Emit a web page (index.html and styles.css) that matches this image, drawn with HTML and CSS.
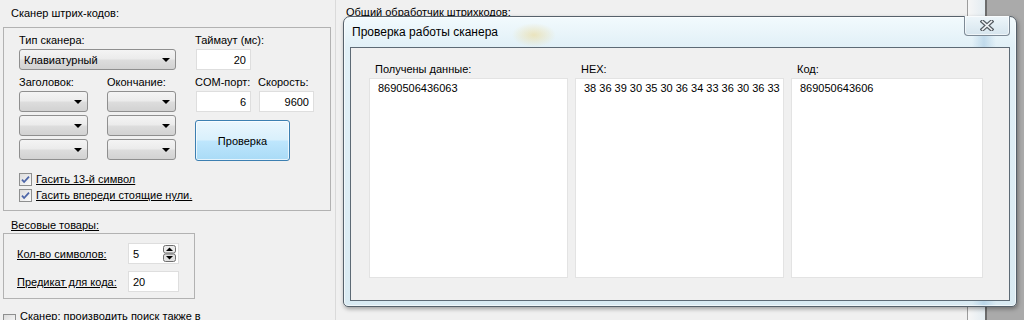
FILE: index.html
```html
<!DOCTYPE html>
<html lang="ru">
  <head>
    <meta charset="UTF-8" />
    <title>Сканер штрих-кодов</title>
    <link rel="stylesheet" href="styles.css">
  </head>
  <body>
    <div class="left">
      <div class="caption">Сканер штрих-кодов:</div>
      <div class="group scanner">
        <div class="grid">
          <span class="lbl type-lbl">Тип сканера:</span>
          <span class="lbl tmo-lbl">Таймаут (мс):</span>
          <div class="combo type-combo">Клавиатурный</div>
          <div class="field right tmo-field">20</div>

          <span class="lbl">Заголовок:</span>
          <span class="lbl">Окончание:</span>
          <span class="lbl">COM-порт:</span>
          <span class="lbl">Скорость:</span>

          <div class="combo"></div>
          <div class="combo"></div>
          <div class="field right">6</div>
          <div class="field right">9600</div>

          <button class="check-btn">Проверка</button>
          <div class="combo"></div>
          <div class="combo"></div>
          <div class="combo"></div>
          <div class="combo"></div>
        </div>
        <div class="checks">
          <label class="checkrow"><span class="chk"><svg width="11" height="11" viewBox="0 0 11 11"><path d="M2 5.6l2.1 2.4L9 2.6" fill="none" stroke="#4d66a8" stroke-width="1.8"/></svg></span><u>Гасить 13-й символ</u></label>
          <label class="checkrow"><span class="chk"><svg width="11" height="11" viewBox="0 0 11 11"><path d="M2 5.6l2.1 2.4L9 2.6" fill="none" stroke="#4d66a8" stroke-width="1.8"/></svg></span><u>Гасить впереди стоящие нули.</u></label>
        </div>
      </div>

      <div class="caption weight-caption"><u>Весовые товары:</u></div>
      <div class="group weights">
        <u>Кол-во символов:</u>
        <div class="field spin-field">5
          <svg class="spin" width="13" height="17" viewBox="0 0 13 17">
            <rect x="0.5" y="0.5" width="12" height="7.5" rx="2" fill="#ececec" stroke="#6f6f6f"/>
            <rect x="0.5" y="9" width="12" height="7.5" rx="2" fill="#e2e2e2" stroke="#6f6f6f"/>
            <path d="M3 6h7L6.5 2.5z" fill="#000"/>
            <path d="M3 11h7l-3.5 3.5z" fill="#000"/>
          </svg>
        </div>
        <u>Предикат для кода:</u>
        <div class="field">20</div>
      </div>

      <label class="checkrow extra"><span class="chk"></span>Сканер: производить поиск также в</label>
    </div>

    <div class="main">
      <div class="main-caption">Общий обработчик штрихкодов:</div>
    </div>
    <div class="rail"></div>
    <div class="desk"></div>

    <div class="dialog">
      <div class="title">Проверка работы сканера</div>
      <div class="close">
        <svg width="14" height="11" viewBox="0 0 14 11">
          <path d="M2.5 1.5l9 8M11.5 1.5l-9 8" stroke="#555b61" stroke-width="4" stroke-linecap="square"/>
          <path d="M2.5 1.5l9 8M11.5 1.5l-9 8" stroke="#f2f4f6" stroke-width="1.6" stroke-linecap="square"/>
        </svg>
      </div>
      <div class="client">
        <div class="cols">
          <div class="col">
            <div class="col-lbl">Получены данные:</div>
            <div class="box">8690506436063</div>
          </div>
          <div class="col">
            <div class="col-lbl">HEX:</div>
            <div class="box">38 36 39 30 35 30 36 34 33 36 30 36 33</div>
          </div>
          <div class="col">
            <div class="col-lbl">Код:</div>
            <div class="box">869050643606</div>
          </div>
        </div>
      </div>
    </div>
  </body>
</html>
```

FILE: styles.css
```css
* {
  box-sizing: border-box;
}
body {
  margin: 0;
  width: 1024px;
  height: 320px;
  overflow: hidden;
  position: relative;
  display: flex;
  background: #f0f0f0;
  color: #000;
  font: 11px/14px "Liberation Sans", Arial, sans-serif;
}
u {
  text-decoration: underline;
}

/* left panel */
.left {
  width: 336px;
  padding: 6px 0 0 3px;
  border-right: 1px solid #dadada;
}
.caption {
  padding-left: 8px;
  height: 14px;
  margin-bottom: 7px;
}
.group {
  border: 1px solid #b2b2b2;
}
.scanner {
  width: 328px;
  height: 184px;
  padding: 5px 0 0 15px;
}
.grid {
  display: grid;
  grid-template-columns: 88px 88px 63px 56px;
  grid-template-rows: 14px 21px 17px 21px 22px 22px;
  row-gap: 2px;
  align-items: end;
}
.type-lbl {
  grid-row: 1;
  grid-column: 1 / 3;
}
.tmo-lbl {
  grid-row: 1;
  grid-column: 3 / 5;
}
.type-combo {
  grid-row: 2;
  grid-column: 1 / 3;
  width: 157px !important;
}
.tmo-field {
  grid-row: 2;
  grid-column: 3 / 5;
}
.combo {
  position: relative;
  width: 69px;
  height: 21px;
  padding: 3px 0 0 4px;
  border: 1px solid #8f8f8f;
  border-radius: 3px;
  background: linear-gradient(#f4f4f4, #ebebeb 48%, #dddddd 52%, #d2d2d2);
}
.combo::after {
  content: '';
  position: absolute;
  right: 5px;
  top: 8px;
  border-left: 4px solid transparent;
  border-right: 4px solid transparent;
  border-top: 4px solid #000;
}
.field {
  width: 55px;
  height: 21px;
  margin-left: 1px;
  padding: 3px 4px 0 4px;
  background: #fff;
  border: 1px solid #dedede;
}
.right {
  text-align: right;
}
.check-btn {
  grid-column: 3 / 5;
  grid-row: 5 / 7;
  align-self: start;
  width: 95px;
  height: 41px;
  margin: 6px 0 0 0;
  border: 1px solid #3c7fb1;
  border-radius: 3px;
  background: linear-gradient(#eaf6fd, #d9f0fc 48%, #bee6fd 52%, #a9dbf6);
  box-shadow: inset 0 0 0 1px rgba(255, 255, 255, 0.7);
  font: inherit;
  color: #000;
  padding: 0;
}
.checks {
  margin-top: 11px;
}
.checkrow {
  display: flex;
  align-items: center;
  gap: 4px;
  height: 16px;
}
.chk {
  width: 13px;
  height: 13px;
  border: 1px solid #8e8f8f;
  background: linear-gradient(135deg, #dcdcdc, #fbfbfb);
  display: flex;
  align-items: center;
  justify-content: center;
}
.weight-caption {
  margin: 7px 0 1px 0;
}
.weights {
  width: 192px;
  height: 66px;
  padding: 9px 0 0 13px;
  display: grid;
  grid-template-columns: 111px 51px;
  grid-auto-rows: 21px;
  row-gap: 7px;
  align-items: center;
}
.weights .field {
  width: 51px;
  margin: 0;
  padding-left: 4px;
}
.spin-field {
  position: relative;
}
.spin {
  position: absolute;
  right: 2px;
  top: 1px;
}
.extra {
  margin-top: 10px;
  align-items: flex-start;
}
.extra .chk {
  margin-top: 5px;
}

/* right side */
.main {
  width: 631px;
}
.main-caption {
  padding: 5px 0 0 10px;
}
.rail {
  width: 20px;
  border-left: 1px solid #9c9c9c;
  border-right: 2px solid #6c6c6c;
  background: linear-gradient(to right, #f6f6f6, #e3ecf1);
}
.desk {
  flex: 1;
  background: #aaaaaa;
}

/* dialog */
.dialog {
  position: absolute;
  left: 343px;
  top: 16px;
  width: 674px;
  height: 291px;
  display: flex;
  flex-direction: column;
  padding: 0 6px 5px 6px;
  border: 1px solid #56616b;
  border-radius: 7px 7px 5px 5px;
  background:
    radial-gradient(ellipse 22px 12px at 190px 18px, rgba(236, 214, 140, 0.55), transparent),
    linear-gradient(to right, transparent 628px, rgba(150, 190, 220, 0.45) 640px, transparent 652px),
    linear-gradient(#f2fafd, #e1f0f7 30px, #d9eaf2);
  box-shadow: 1px 2px 4px rgba(0, 0, 0, 0.35), inset 0 0 0 1px rgba(255, 255, 255, 0.6);
}
.title {
  height: 30px;
  padding-left: 2px;
  font-size: 12px;
  line-height: 30px;
}
.close {
  position: absolute;
  top: -1px;
  right: 6px;
  width: 46px;
  height: 20px;
  display: flex;
  align-items: center;
  justify-content: center;
  border: 1px solid #7d8a96;
  border-top: none;
  border-radius: 0 0 4px 4px;
  background: linear-gradient(#eef6fa, #d6e5ee);
  box-shadow: inset 0 0 0 1px rgba(255, 255, 255, 0.6);
}
.client {
  flex: 1;
  padding: 14px 0 0 18px;
  border: 1px solid #5d6a75;
  background: #f0f0f0;
}
.cols {
  display: grid;
  grid-template-columns: 199px 209px 192px;
  column-gap: 7px;
}
.col-lbl {
  height: 14px;
  margin-bottom: 2px;
  padding-left: 6px;
}
.box {
  height: 200px;
  padding: 2px 6px 2px 8px;
  white-space: nowrap;
  background: #fff;
  border: 1px solid #e3e3e3;
}
```
